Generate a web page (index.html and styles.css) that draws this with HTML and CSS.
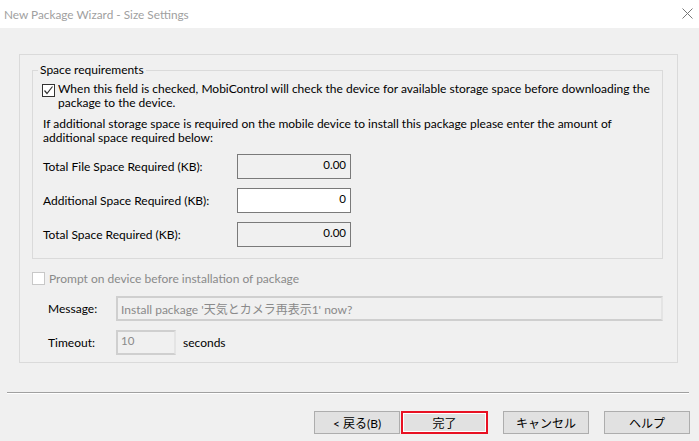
FILE: index.html
```html
<!DOCTYPE html>
<html lang="en">
<head>
    <meta charset="UTF-8">
    <meta name="viewport" content="width=device-width, initial-scale=1.0">
    <title>New Package Wizard - Size Settings</title>
    <link rel="stylesheet" href="styles.css">
</head>
<body>
    <div class="titlebar">
        <span class="title">New Package Wizard - Size Settings</span>
        <svg class="close" width="11" height="11" viewBox="0 0 11 11">
            <path d="M0.5 0.5 L10.5 10.5 M10.5 0.5 L0.5 10.5" stroke="#777" stroke-width="1" fill="none"/>
        </svg>
    </div>

    <div class="content">
        <div class="outer">
            <fieldset class="group">
                <legend>Space requirements</legend>
                <div class="check-row">
                    <span class="checkbox checked">
                        <svg width="11" height="11" viewBox="0 0 11 11">
                            <path d="M1.5 5.5 L4 8.5 L9.5 1.5" stroke="#333" stroke-width="1.2" fill="none"/>
                        </svg>
                    </span>
                    <p>When this field is checked, MobiControl will check the device for available storage space before downloading the package to the device.</p>
                </div>
                <p class="info">If additional storage space is required on the mobile device to install this package please enter the amount of additional space required below:</p>

                <div class="row">
                    <label>Total File Space Required (KB):</label>
                    <div class="field readonly">0.00</div>
                </div>
                <div class="row">
                    <label>Additional Space Required (KB):</label>
                    <div class="field editable">0</div>
                </div>
                <div class="row">
                    <label>Total Space Required (KB):</label>
                    <div class="field readonly">0.00</div>
                </div>
            </fieldset>

            <div class="prompt-row">
                <span class="checkbox disabled"></span>
                <span class="dim">Prompt on device before installation of package</span>
            </div>
            <div class="row2">
                <label>Message:</label>
                <div class="field disabled-field message">Install package '天気とカメラ再表示1' now?</div>
            </div>
            <div class="row2">
                <label>Timeout:</label>
                <div class="field disabled-field timeout">10</div>
                <span class="unit">seconds</span>
            </div>
        </div>
    </div>

    <div class="separator"></div>

    <div class="buttons">
        <button class="back">&lt; 戻る(B)</button>
        <button class="finish">完了</button>
        <button>キャンセル</button>
        <button>ヘルプ</button>
    </div>
</body>
</html>
```

FILE: styles.css
```css
body {
    margin: 0;
    width: 699px;
    height: 441px;
    background-color: #f0f0f0;
    font-family: Lato, "Noto Sans CJK JP", sans-serif;
    font-size: 12px;
    color: #000;
    overflow: hidden;
}
p {
    margin: 0;
}
.titlebar {
    height: 28px;
    background-color: #fff;
    display: flex;
    align-items: center;
    justify-content: space-between;
    padding: 0 6px 0 4px;
}
.title {
    color: #a0a0a0;
    font-size: 11.8px;
}
.close {
    margin-top: -2px;
}
.content {
    padding: 26px 21px 0 19px;
}
.outer {
    border: 1px solid #dadada;
    height: 309px;
    box-sizing: border-box;
    padding: 0 0 0 12px;
}
.group {
    margin: 8px 14px 0 0;
    border: 1px solid #dadada;
    padding: 5px 4px 11px 10px;
    line-height: 14px;
}
.group legend {
    padding: 0 2px;
    margin-left: -5px;
}
.check-row {
    display: flex;
    align-items: flex-start;
}
.checkbox {
    display: inline-block;
    width: 13px;
    height: 13px;
    box-sizing: border-box;
    border: 1px solid #333;
    background-color: #fff;
    flex: none;
}
.checkbox svg {
    display: block;
}
.check-row .checkbox {
    margin: 2px 3px 0 -1px;
}
.info {
    margin-top: 7px;
}
.row {
    display: flex;
    align-items: center;
    margin-top: 9px;
}
.row label {
    width: 194px;
}
.field {
    box-sizing: border-box;
    height: 25px;
    border: 1px solid #7a7a7a;
    text-align: right;
    padding: 3px 4px 0 0;
    color: #000;
    font-size: 11.5px;
}
.row .field {
    width: 114px;
}
.readonly {
    background-color: #f0f0f0;
}
.editable {
    background-color: #fff;
}
.prompt-row {
    display: flex;
    align-items: center;
    margin-top: 12px;
}
.checkbox.disabled {
    border-color: #c8c8c8;
    background-color: #fff;
    margin-right: 4px;
}
.dim {
    color: #8a8a8a;
}
.row2 {
    display: flex;
    align-items: center;
    margin-top: 10px;
    padding-left: 16px;
}
.row2 + .row2 {
    margin-top: 9px;
}
.row2 label {
    width: 68px;
}
.disabled-field {
    border: 2px solid #cfcfcf;
    border-right-color: #e4e4e4;
    background-color: #f0f0f0;
    color: #8a8a8a;
    text-align: left;
}
.message {
    flex: 1;
    margin-right: 14px;
    font-size: 12px;
    padding: 2px 0 0 3px;
}
.timeout {
    width: 60px;
    padding: 2px 0 0 3px;
}
.unit {
    margin-left: 7px;
}
.separator {
    margin: 29px 10px 0 7px;
    height: 1px;
    background-color: #a0a0a0;
    border-bottom: 1px solid #fff;
}
.buttons {
    display: flex;
    justify-content: flex-end;
    padding: 17px 9px 0 0;
}
.buttons button {
    width: 86px;
    height: 23px;
    margin-left: 15px;
    background-color: #e1e1e1;
    border: 1px solid #adadad;
    font-family: Lato, "Noto Sans CJK JP", sans-serif;
    font-size: 12px;
    color: #000;
    padding: 0;
}
.buttons .back {
    margin-left: 0;
}
.buttons .finish {
    margin-left: 1px;
    width: 87px;
    border: 2px solid #e81123;
    box-shadow: inset 0 0 0 1px #fff;
}
```
